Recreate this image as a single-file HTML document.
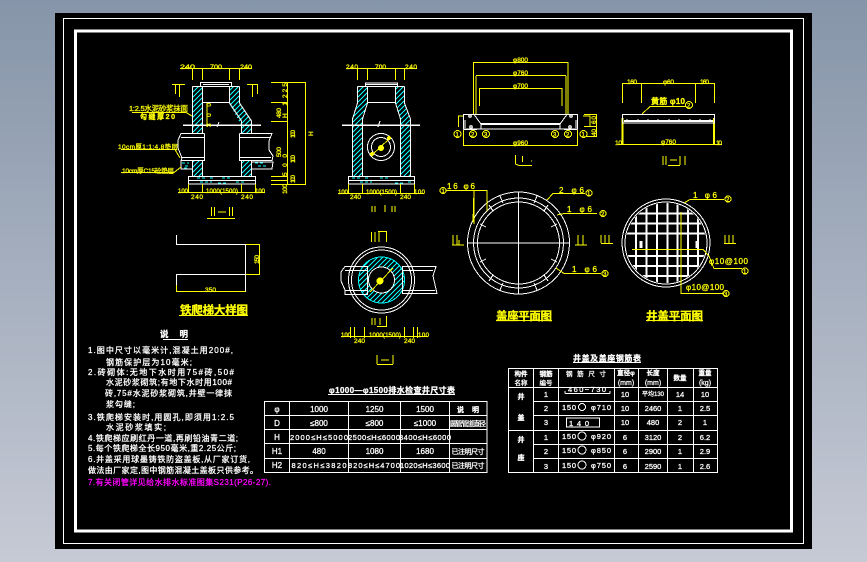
<!DOCTYPE html>
<html><head><meta charset="utf-8"><title>检查井</title>
<style>
html,body{margin:0;padding:0;background:#a5afbe}
svg{display:block}
text{font-family:"Liberation Sans","Noto Sans CJK SC",sans-serif;font-weight:400;stroke-width:.28;text-rendering:optimizeSpeed}
.w,.w text{fill:#fff;stroke:#fff}.y,.y text{fill:#ff0;stroke:#ff0}.w text.m{fill:#f0f;stroke:#f0f}
.b{font-weight:700}
</style></head><body>
<svg width="867" height="562" viewBox="0 0 867 562" xmlns="http://www.w3.org/2000/svg" shape-rendering="crispEdges">
<defs>
<linearGradient id="bg" x1="0" y1="0" x2="0" y2="1"><stop offset="0" stop-color="#8695a9"/><stop offset="1" stop-color="#c6cad5"/></linearGradient>
<pattern id="h" width="5" height="5" patternUnits="userSpaceOnUse"><path d="M-1 6L6 -1M-1 1L1 -1M4 6L6 4" stroke="#0ff" stroke-width="1" fill="none"/></pattern>
<clipPath id="gc"><circle cx="666" cy="243" r="40"/></clipPath>
</defs>
<rect width="867" height="562" fill="url(#bg)"/>
<rect x="55" y="13" width="757" height="536" fill="#000"/>
<rect x="63.5" y="18.5" width="740" height="525" fill="none" stroke="#fff" stroke-width="1"/>
<rect x="75.5" y="31" width="716" height="500" fill="none" stroke="#fff" stroke-width="3"/>

<!-- II-II left -->
<g fill="url(#h)" stroke="none">
<rect x="192" y="86" width="11" height="47"/><path d="M229 86H240V103L252 121V133H241V125L229 103Z"/>
<rect x="192" y="160" width="11" height="16"/><rect x="241" y="160" width="11" height="16"/>
</g>
<g fill="none" stroke="#fff" stroke-width="1">
<path d="M192.500 86.500H239.500M192.500 86.500V133M202.500 86.500V133M229.500 86.500V103L241.500 121V133M239.500 86.500V103L251.500 121V133M202 102.500H229.500"/>
<path d="M200.500 86V82.500H231.500V86M203 84.500H229"/>
<path d="M192.500 160V176M202.500 160V176M241.500 160V176M251.500 160V176"/>
<path d="M204.500 133.500H181L178 140V148L182 158L181 160.500H204.500V133.500M181 137.500H204M181 157.500H204"/>
<path d="M239.500 133.500H272L269 141V150L273 156L272 160.500H239.500V133.500M240 137.500H271M240 157.500H271"/>
<path d="M181 161V169H192M252 162H273L272 169H252"/>
<rect x="188.500" y="176.500" width="67" height="7.500"/><path d="M189 180.500H255"/>
</g>
<path d="M183 125H261" stroke="#fff" stroke-width="1.500"/>
<path d="M217 127L219 122" stroke="#fff"/>
<path d="M182 163h7M185 166h5M184 168h4M255 163h10M258 166h9M197 178h8M210 178h5M222 178h8M200 182h12M218 183h8M236 182h10" stroke="#0ff" stroke-width="1" stroke-dasharray="3 2"/>
<g fill="none" stroke="#ff0" stroke-width="1">
<path d="M180 68.500H252M192.500 68V80M202.500 68V80M229.500 68V80M239.500 68V80"/>
<path d="M172 84.500H185M175.500 85V94M179.500 85V97M247 84.500H258M257.500 85V94M252.500 85V97"/>
<path d="M271 82.500H306M271 102.500H288M271 121.500H288M271 176.500H288M271 180.500H288M271 184.500H306M287.500 82V184M305.500 82V184"/>
<path d="M178 192.500H265M188.500 184V193M202.500 184V193M241.500 184V193M255.500 184V193"/>
<path d="M132 112.500H186L192 116M121 149.500H175L180 158M121 172.500H174L181 167"/>
<path d="M207 218.500H235"/><path d="M211.500 207V216M214.500 207V216M229.500 207V216M232.500 207V216M218 212H226" stroke-width="1"/>
<path d="M207 103V127" stroke-width="1"/>
</g>
<g class="y" font-size="6.500">
<text x="180" y="69" textLength="15" lengthAdjust="spacingAndGlyphs">240</text>
<text x="210" y="69" textLength="12" lengthAdjust="spacingAndGlyphs">700</text>
<text x="240" y="69" textLength="12" lengthAdjust="spacingAndGlyphs">240</text>
<text x="129" y="111" font-size="7.500" textLength="59">1:2.5水泥砂浆抹面</text>
<text x="140" y="119" font-size="7" class="b" textLength="35">勾缝厚20</text>
<text x="118" y="149" font-size="6.500" textLength="60">10cm厚1:1:4.8垫层</text>
<text x="122" y="173" font-size="6.500" textLength="52">10cm厚C15砼垫层</text>
<text x="178" y="193" font-size="6" textLength="10">100</text>
<text x="191" y="199" textLength="12">240</text>
<text x="206" y="193" font-size="6" textLength="32">1000(1500)</text>
<text x="241" y="199" textLength="12">240</text>
<text x="255" y="193" font-size="6" textLength="10">100</text>
<text transform="translate(287,98) rotate(-90)" textLength="15">225</text>
<text transform="translate(281,118) rotate(-90)" textLength="10">480</text>
<text transform="translate(287,118) rotate(-90)" textLength="16">H1</text>
<text transform="translate(287,176) rotate(-90)" textLength="22">500</text>
<text transform="translate(281,157) rotate(-90)" textLength="10">500</text>
<text transform="translate(295,138) rotate(-90)" textLength="8">100</text>
<text transform="translate(295,163) rotate(-90)" textLength="8">100</text>
<text transform="translate(295,183) rotate(-90)" textLength="8">100</text>
<text transform="translate(287,194) rotate(-90)" textLength="10">100</text>
<text transform="translate(211,127) rotate(-90)" textLength="24">300</text>
<text transform="translate(313,136) rotate(-90)">H</text>
</g>

<!-- III-III -->
<g fill="url(#h)">
<path d="M358 86H367V103L362 119V176H352V118L358 103Z"/><path d="M395 86H405V103L411 119V176H400V119L395 103Z"/>
</g>
<g fill="none" stroke="#fff" stroke-width="1">
<path d="M357.500 86.500H404.500M357.500 86.500V103L352.500 119V176M367.500 86.500V103L362.500 119V176M395.500 86.500V103L400.500 119V176M404.500 86.500V103L410.500 119V176M367 102.500H395"/>
<path d="M365.500 86V83H397.500V86M366 84.500H397"/>
<circle cx="381" cy="147" r="13.500"/><circle cx="381" cy="147" r="9.500"/>
<rect x="348.500" y="176.500" width="66" height="7.500"/><path d="M349 180.500H414"/>
</g>
<path d="M342 125H420" stroke="#fff" stroke-width="1.500"/>
<path d="M378 127L380 121" stroke="#fff"/>
<path d="M352 178h8M365 178h5M380 178h9M360 182h12M395 183h8M408 182h3" stroke="#0ff" stroke-dasharray="3 2"/>
<path d="M372 155L389 139" stroke="#ff0"/><circle cx="381" cy="148" r="3" fill="#ff0"/><circle cx="389" cy="138" r="2" fill="#ff0"/><circle cx="372" cy="154" r="2" fill="#ff0"/>
<g fill="none" stroke="#ff0">
<path d="M346 68.500H417M357.500 68V80M367.500 68V80M395.500 68V80M404.500 68V80"/>
<path d="M338 193.500H424M348.500 184V194M362.500 184V194M400.500 184V194M414.500 184V194"/>
<path d="M372 206V212M375 206V212M392 206V212M395 206V212M385 205V212"/>
</g>
<g class="y" font-size="6.500">
<text x="346" y="69" textLength="12">240</text><text x="375" y="69" textLength="11">700</text><text x="405" y="69" textLength="12">240</text>
<text x="338" y="194" font-size="6" textLength="10">100</text><text x="350" y="199" textLength="11">240</text>
<text x="366" y="194" font-size="6" textLength="31">1000(1500)</text><text x="400" y="199" textLength="11">240</text>
<text x="414" y="194" font-size="6" textLength="11">100</text>
</g>

<!-- I-I top -->
<g fill="none" stroke="#ff0">
<path d="M473.500 62.500H568M473.500 62V115M568 62V115M476 75.500H566M476 76V115M566 76V115M479 88.500H562M479.500 88V106M562 88V106"/>
<path d="M463.500 145.500H578M463.500 130V146M577.500 130V146"/>
<path d="M458.500 127V116H464M583 116H590V127M584 114.500H597M584 126.500H597M584 136.500H597M596.500 114V137M477 134H473"/>
<path d="M515.500 155V164L519 165.500H532M522.500 156V162M531 161H532"/>
</g>
<g fill="none" stroke="#fff">
<path d="M463.500 114.500H577.500V129H463.500ZM463.500 129.500H477M564 129.500H577.500M479 129H564"/>
<path d="M474 114.500L481 124V129M567 114.500L560 124V129M465 128V120M576 128V120"/>
<path d="M481 124H560" stroke-width="2"/>
<circle cx="470" cy="116" r="1.300"/><circle cx="471" cy="127" r="1.300"/><circle cx="571" cy="116" r="1.300"/><circle cx="570" cy="127" r="1.300"/>
</g>
<g fill="#000" stroke="#ff0">
<circle cx="457.500" cy="134" r="3.500"/><circle cx="473" cy="134" r="3.500"/><circle cx="486" cy="134" r="3.500"/><circle cx="555" cy="134" r="3.500"/><circle cx="568" cy="134" r="3.500"/><circle cx="583.500" cy="134" r="3.500"/>
</g>
<g class="y" font-size="6.500">
<text x="513" y="62" textLength="15">φ800</text><text x="513" y="75" textLength="15">φ760</text><text x="513" y="88" textLength="15">φ700</text><text x="513" y="145" textLength="15">φ960</text>
<text x="455.500" y="136.500" font-size="6">1</text><text x="471" y="136.500" font-size="6">2</text><text x="484" y="136.500" font-size="6">3</text><text x="553" y="136.500" font-size="6">3</text><text x="566" y="136.500" font-size="6">2</text><text x="581.500" y="136.500" font-size="6">1</text>
<text transform="translate(596,124) rotate(-90)" textLength="8">60</text><text transform="translate(596,136) rotate(-90)" textLength="7">40</text>
</g>

<!-- II-II right -->
<g fill="none" stroke="#ff0">
<path d="M622 83.500H715M622.500 83V103M641.500 83V103M695.500 83V103M714.500 83V103"/>
<path d="M650 106.500H686M650 106.500L642 114M622 144.500H714M618 144.500H622M714 144.500H722"/>
<path d="M622.500 118V145M714 118V145" stroke-width="2"/>
<path d="M663 156V165M666 156V165M680 156V165M685 156V165M670 160H677M668 165.500H680"/>
<circle cx="689" cy="105" r="3.500"/>
</g>
<rect x="622.500" y="114.500" width="92" height="8.500" fill="none" stroke="#fff"/>
<path d="M624 121h89M627 119.500v2M638 119.500v2M648 119.500v2M658 119.500v2M669 119.500v2M679 119.500v2M690 119.500v2M700 119.500v2M710 119.500v2" stroke="#fff" stroke-width="2" fill="none"/>
<g class="y" font-size="6.500">
<text x="627" y="84" textLength="10">160</text><text x="663" y="84" textLength="11">φ60</text><text x="700" y="84" textLength="9">160</text>
<text x="651" y="104" font-size="8" class="b" textLength="34">黄筋 φ10</text><text x="687" y="107.500" font-size="6">2</text>
<text x="661" y="144" textLength="15">φ760</text><text x="615" y="145" textLength="7">10</text><text x="716" y="145" textLength="6">10</text>
</g>

<!-- ladder -->
<path d="M176.500 235V244.500H245.500V291M176.500 291V274.500H245.500" fill="none" stroke="#fff"/>
<path d="M246 244.500H260M246 274.500H260M259.500 244V275M176 291.500H246M176.500 285V292" fill="none" stroke="#ff0"/>
<g class="y" font-size="6.500"><text x="205" y="292" textLength="11">350</text><text transform="translate(259,264) rotate(-90)" textLength="9">150</text>
<text x="180" y="314" font-size="11.500" class="b" textLength="68">铁爬梯大样图</text></g>
<path d="M179 315.500H248" stroke="#ff0"/>

<!-- I-I lower -->
<circle cx="381.500" cy="280" r="18" fill="none" stroke="url(#h)" stroke-width="10"/>
<g fill="none" stroke="#fff">
<circle cx="381.500" cy="280" r="33"/><circle cx="381.500" cy="280" r="30"/>
</g>
<circle cx="381.500" cy="280" r="23" fill="none" stroke="#0ff"/><circle cx="381.500" cy="280" r="13" fill="none" stroke="#fff"/>
<path d="M370 292L393 268" stroke="#ff0"/><circle cx="380" cy="281" r="3.500" fill="#ff0"/>
<g fill="none" stroke="#fff"><path d="M367.500 266.500H345L341 272V281L345 290V294.500H367.500Z"/><path d="M402.500 266.500H436L433 276L437 293.500H402.500Z"/></g>
<path d="M345 270.500H367M345 290.500H367M402 270.500H433M402 290.500H435" stroke="#fff"/>
<g fill="none" stroke="#ff0">
<path d="M371.500 232V242M375 232V242M379 232V242M386.500 231V242M378 231.500H386"/>
<path d="M372 318V325M375 318V325M380 318V325M386.500 316V326M377 326.500H387" />
<path d="M341 336.500H428M350.500 327V338M354.500 327V338M364.500 327V338M404.500 327V338M413.500 327V338M417.500 327V338"/>
<path d="M377 355V364M393 355V364M377 364.500H393M381 360H389"/>
</g>
<g class="y" font-size="6.500">
<text x="341" y="337" font-size="6" textLength="10">100</text><text x="354" y="343" textLength="11">240</text>
<text x="369" y="337" font-size="6" textLength="32">1000(1500)</text><text x="404" y="343" textLength="11">240</text><text x="418" y="337" font-size="6" textLength="11">100</text>
</g>

<!-- plan circle 1 -->
<g fill="none" stroke="#fff">
<circle cx="518.500" cy="243" r="51"/><circle cx="518.500" cy="243" r="45"/><circle cx="518.500" cy="243" r="41"/>
<path d="M518.500 192V294M468 243H569"/>
<path d="M500 196L503 203M537 196L534 203M548 205L544 211M557 224L551 227M489 205L493 211M480 224L486 227M557 262L551 259M480 262L486 259M489 281L493 275M548 281L544 275M500 290L503 283M537 290L534 283"/>
</g>
<g fill="none" stroke="#ff0">
<path d="M446 190.500H487V211M474 190.500V224M474 190.500L473 222"/>
<path d="M547 200L553 193.500H585M557 215L564 213.500H597M556 268L564 273.500H601"/>
<path d="M453 235V245M457 235V245M452 245H464M459 240V245"/>
<path d="M578 235V245M583 235V245M575 245H587"/>
<circle cx="443" cy="190.500" r="3"/><circle cx="589" cy="193" r="3"/><circle cx="603" cy="213.500" r="3"/><circle cx="605" cy="273.500" r="3"/>
</g>
<g class="y" font-size="8">
<text x="447" y="189" textLength="28">16 φ6</text><text x="559" y="193" textLength="25">2 φ6</text><text x="567" y="212" textLength="25">1 φ6</text><text x="572" y="272" textLength="25">1 φ6</text>
<text x="441.500" y="193" font-size="6">1</text><text x="587" y="195.500" font-size="6">1</text><text x="601" y="216" font-size="6">2</text><text x="603" y="276" font-size="6">3</text>
<text x="496" y="320" font-size="11.500" class="b" textLength="56">盖座平面图</text>
<text x="646" y="320" font-size="11.500" class="b" textLength="57">井盖平面图</text>
</g>
<path d="M496 320.500H552M646 320.500H703" stroke="#ff0"/>

<!-- plan circle 2 -->
<g fill="none" stroke="#fff">
<circle cx="666" cy="243" r="44"/><circle cx="666" cy="243" r="41"/>
<g clip-path="url(#gc)" stroke-width="2">
<path d="M636 200V290M646.500 200V290M657 200V290M667.500 200V290M677.500 200V290M688 200V290M698 200V290"/>
<path d="M620 213.500H712M620 223.500H712M620 233.500H712M620 256H712M620 266H712M620 276H712"/>
</g>
<path d="M641 241V248M697 241V248" stroke-width="3"/>
</g>
<g fill="none" stroke="#ff0">
<path d="M684 203L690 199.500H724M632 249.500H703L709 256M709 256L714 268.500H742M681 212V293.500H724"/>
<path d="M601 235V243M605 235V243M609 235V243M601 243.500H613"/>
<path d="M725 235V243M729 235V243M733 235V243M724 243.500H736"/>
<circle cx="728" cy="199" r="3"/><circle cx="745" cy="271" r="3"/><circle cx="726" cy="293.500" r="3"/>
</g>
<g class="y" font-size="8">
<text x="693" y="198" textLength="24">1 φ6</text><text x="709" y="264" textLength="39">φ10@100</text><text x="686" y="290" textLength="38">φ10@100</text>
<text x="726" y="201.500" font-size="6">2</text><text x="743" y="273.500" font-size="6">1</text><text x="724" y="296" font-size="6">3</text>
</g>

<!-- notes -->
<g class="w" font-size="8">
<text x="160" y="337" font-size="8.500" class="b" textLength="28">说 明</text>
<text x="88" y="353" textLength="145">1.图中尺寸以毫米计,混凝土用200#,</text>
<text x="106" y="365" textLength="86">钢筋保护层为10毫米;</text>
<text x="88" y="375" textLength="146">2.砖砌体:无地下水时用75#砖,50#</text>
<text x="106" y="385" textLength="126">水泥砂浆砌筑;有地下水时用100#</text>
<text x="105" y="396" textLength="127">砖,75#水泥砂浆砌筑,井壁一律抹</text>
<text x="106" y="407" textLength="29">浆勾缝;</text>
<text x="88" y="420" textLength="146">3.铁爬梯安装时,用圆孔,即须用1:2.5</text>
<text x="106" y="430" textLength="60">水泥砂浆填实;</text>
<text x="88" y="441" textLength="150">4.铁爬梯应刷红丹一道,再刷铅油青二道;</text>
<text x="88" y="451" textLength="148">5.每个铁爬梯全长950毫米,重2.25公斤;</text>
<text x="88" y="462" textLength="162">6.井盖采用球墨铸铁防盗盖板,从厂家订货,</text>
<text x="88" y="473" textLength="170">做法由厂家定,图中钢筋混凝土盖板只供参考。</text>
<text x="88" y="485" class="m" textLength="183">7.有关闭管详见给水排水标准图集S231(P26-27).</text>
</g>
<path d="M163 339.500H188" stroke="#fff"/>

<!-- table 1 -->
<g fill="none" stroke="#fff">
<rect x="264.500" y="401.500" width="222.500" height="71"/>
<path d="M289.500 402V472M348.500 402V472M400.500 402V472M449.500 402V472M265 415.500H487M265 429.500H487M265 443.500H487M265 458.500H487"/>
</g>
<text x="329" y="393" class="w b" font-size="8" textLength="126">φ1000—φ1500排水检查井尺寸表</text>
<path d="M328 394.500H455" stroke="#fff"/>
<g class="w" font-size="8" text-anchor="middle">
<text x="277" y="412">φ</text><text x="319" y="412">1000</text><text x="374.500" y="412">1250</text><text x="425" y="412">1500</text><text x="468" y="412" class="b" font-size="7" textLength="22">说 明</text>
<text x="277" y="426">D</text><text x="319" y="426">≤800</text><text x="374.500" y="426">≤800</text><text x="425" y="426">≤1000</text><text x="468" y="426" font-size="7" textLength="36">圆管管道直径</text>
<text x="277" y="440">H</text><text x="319" y="440" textLength="58" font-size="7.500">2000≤H≤5000</text><text x="374" y="440" textLength="52" font-size="7.500">2500≤H≤6000</text><text x="425" y="440" textLength="52" font-size="7.500">3400≤H≤6000</text>
<text x="277" y="454">H1</text><text x="319" y="454">480</text><text x="374.500" y="454">1080</text><text x="425" y="454">1680</text><text x="468" y="454" font-size="7" textLength="33">已注明尺寸</text>
<text x="277" y="468">H2</text><text x="319" y="468" textLength="55" font-size="7.500">820≤H≤3820</text><text x="374" y="468" textLength="52" font-size="7.500">820≤H≤4700</text><text x="425" y="468" textLength="50" font-size="7.500">1020≤H≤3600</text><text x="468" y="468" font-size="7" textLength="33">已注明尺寸</text>
</g>

<!-- table 2 -->
<g fill="none" stroke="#fff">
<rect x="508.500" y="368.500" width="209" height="104"/>
<path d="M533.500 369V472M558.500 369V472M614.500 369V472M638.500 369V472M667.500 369V472M693.500 369V472M508 387.500H718M508 430.500H718M534 401.500H718M534 415.500H718M534 444.500H718M534 458.500H718"/>
<path d="M565 393.500H610M565 393.500V391M610 393.500V391"/>
<circle cx="582" cy="407" r="3.500"/>
<rect x="566.500" y="418" width="33" height="9"/>
<circle cx="582" cy="436" r="4"/><circle cx="582" cy="450" r="4"/><circle cx="582" cy="465" r="4"/>
</g>
<text x="573" y="361" class="w b" font-size="8" textLength="68">井盖及盖座钢筋表</text>
<path d="M573 362.500H641" stroke="#fff"/>
<g class="w" font-size="7.500" text-anchor="middle">
<text x="521" y="376" class="b" font-size="6.500">构件</text><text x="521" y="385" font-size="6.500">名称</text>
<text x="546" y="376" class="b" font-size="6.500">钢筋</text><text x="546" y="385" font-size="6.500">编号</text>
<text x="586" y="376" font-size="6.500" textLength="40">钢筋尺寸</text>
<text x="626" y="375" class="b" font-size="6.500">直径φ</text><text x="626" y="385" font-size="7">(mm)</text>
<text x="653" y="375" class="b" font-size="6.500">长度</text><text x="653" y="385" font-size="7">(mm)</text>
<text x="680" y="380" class="b" font-size="6.500">数量</text>
<text x="705" y="375" class="b" font-size="6.500">重量</text><text x="705" y="385" font-size="7">(kg)</text>
<text x="521" y="399" class="b" font-size="7">井</text><text x="521" y="420" class="b" font-size="7">盖</text><text x="521" y="442" class="b" font-size="7">井</text><text x="521" y="460" class="b" font-size="7">座</text>
<text x="546" y="397">1</text><text x="546" y="411">2</text><text x="546" y="425">3</text><text x="546" y="440">1</text><text x="546" y="454">2</text><text x="546" y="469">3</text>
<text x="587" y="392" textLength="38">460~730</text>
<text x="569" y="410" textLength="14">150</text><text x="601" y="410" textLength="20">φ710</text>
<text x="579" y="426" textLength="20">140</text>
<text x="569" y="439" textLength="14">150</text><text x="601" y="439" textLength="20">φ920</text>
<text x="569" y="453" textLength="14">150</text><text x="601" y="453" textLength="20">φ850</text>
<text x="569" y="468" textLength="14">150</text><text x="601" y="468" textLength="20">φ750</text>
<text x="625" y="397">10</text><text x="625" y="411">10</text><text x="625" y="425">10</text><text x="625" y="440">6</text><text x="625" y="454">6</text><text x="625" y="469">6</text>
<text x="653" y="396" font-size="6">平均130</text><text x="653" y="411">2460</text><text x="653" y="425">480</text><text x="653" y="440">3120</text><text x="653" y="454">2900</text><text x="653" y="469">2590</text>
<text x="680" y="397">14</text><text x="680" y="411">1</text><text x="680" y="425">2</text><text x="680" y="440">2</text><text x="680" y="454">1</text><text x="680" y="469">1</text>
<text x="705" y="397">10</text><text x="705" y="411">2.5</text><text x="705" y="425">1</text><text x="705" y="440">6.2</text><text x="705" y="454">2.9</text><text x="705" y="469">2.6</text>
</g>
</svg>
</body></html>
